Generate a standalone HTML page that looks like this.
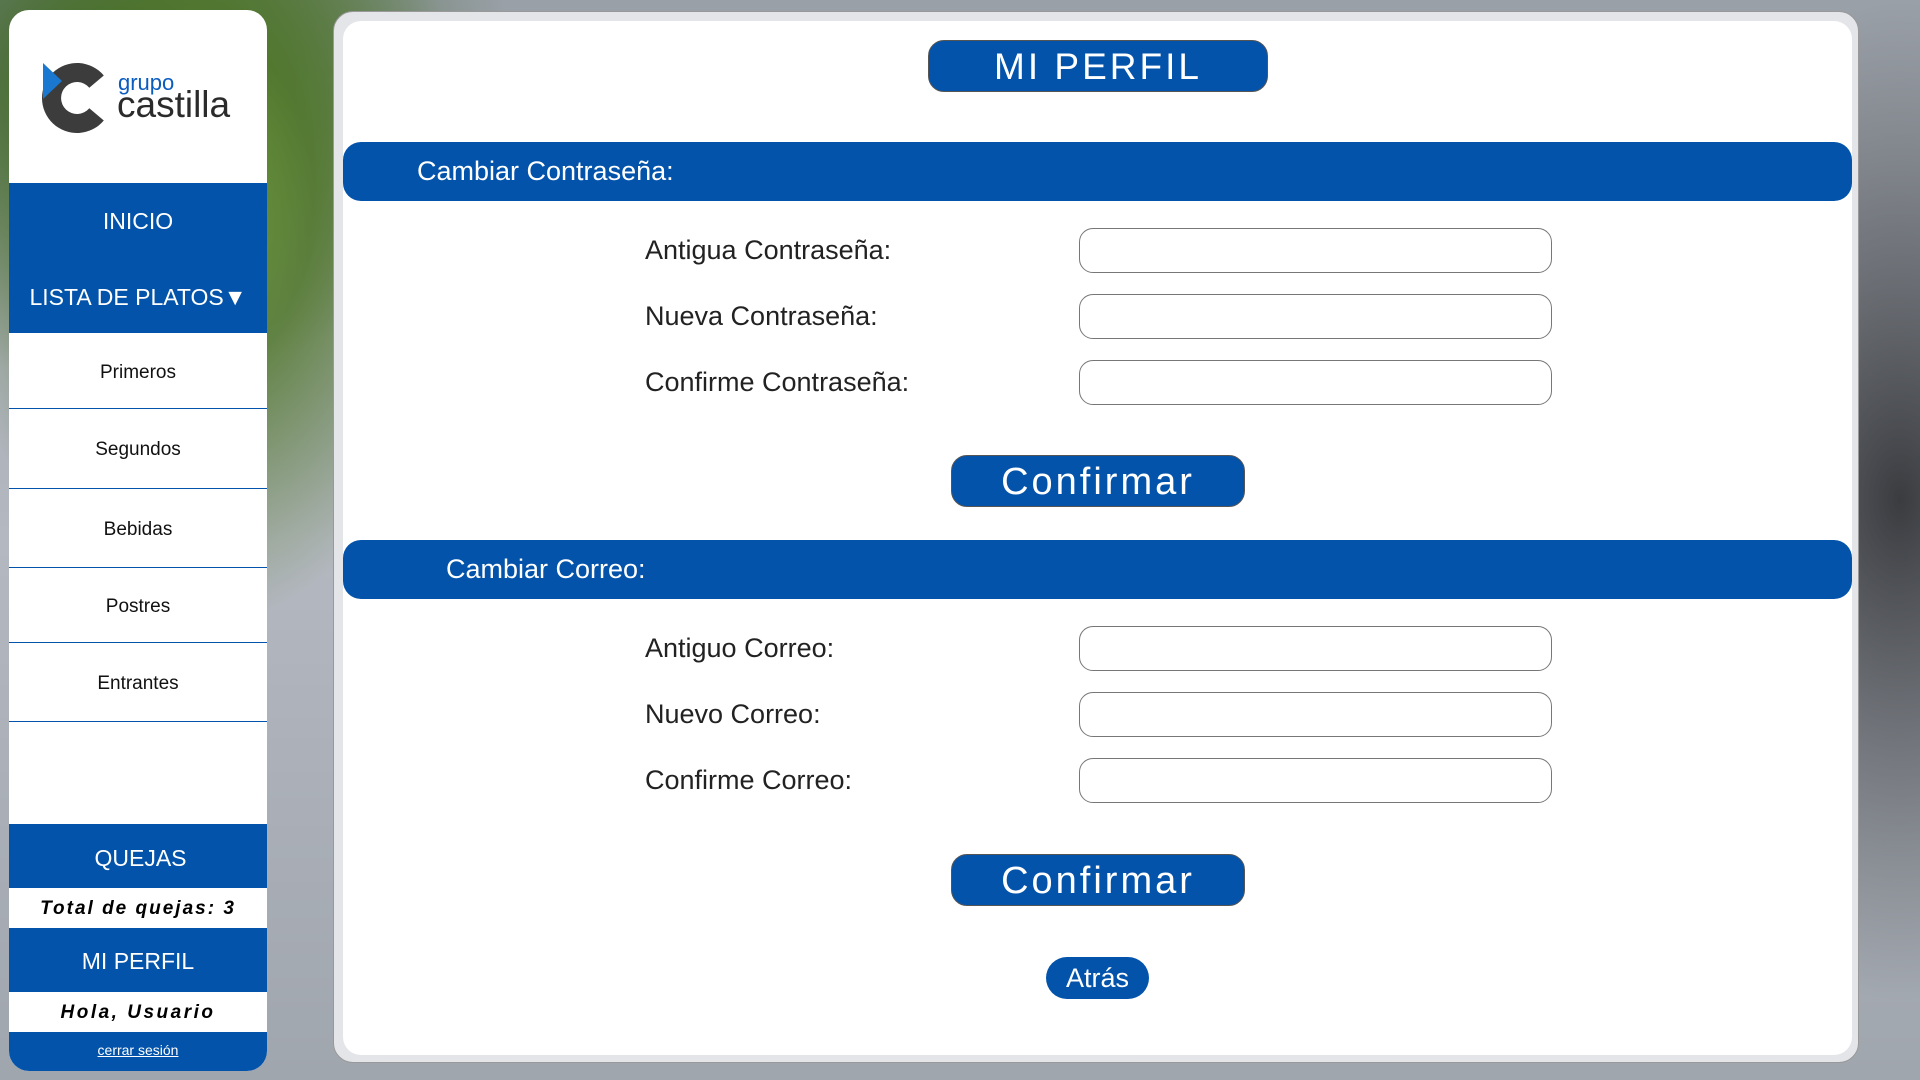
<!DOCTYPE html>
<html><head><meta charset="utf-8"><style>
*{margin:0;padding:0;box-sizing:border-box}
body{width:1920px;height:1080px;overflow:hidden;position:relative;font-family:"Liberation Sans",sans-serif;
background:
radial-gradient(ellipse 260px 420px at 210px 200px,#6f9a3e 0%,rgba(80,120,40,.8) 40%,rgba(80,120,40,0) 100%),
radial-gradient(ellipse 400px 300px at 120px 80px,#2f5a18 0%,rgba(40,80,20,0) 100%),
radial-gradient(ellipse 300px 500px at 1900px 500px,#3a3c40 0%,rgba(60,60,65,0) 100%),
linear-gradient(180deg,#9aa0a8 0%,#b4b8c0 50%,#a0a6ae 100%);}
.side{position:absolute;left:9px;top:10px;width:258px;height:1061px;background:#fff;border-radius:20px;overflow:hidden}
.blue{background:#0353ab;color:#fff}
.nav{position:absolute;left:0;width:258px;text-align:center}
.item{position:absolute;left:0;width:258px;text-align:center;font-size:19px;color:#111;border-bottom:1px solid #0353ab}
.main{position:absolute;left:333px;top:11px;width:1526px;height:1052px;background:#e4e5e8;border-radius:20px;border:1px solid #999}
.inner{position:absolute;left:9px;top:9px;width:1509px;height:1034px;background:#fff;border-radius:18px}
.pill{position:absolute;background:#0353ab;color:#fff;text-align:center;border:1px solid #555}
.bar{position:absolute;left:0;width:1509px;height:59px;background:#0353ab;border-radius:18px;color:#fff;font-size:27px;line-height:59px}
.lab{position:absolute;left:302px;font-size:27px;color:#222}
.inp{position:absolute;left:736px;width:473px;height:45px;border:1px solid #777;border-radius:14px}
</style></head><body>
<div class="side">
 <svg style="position:absolute;left:0;top:0" width="110" height="140" viewBox="0 0 110 140">
  <path d="M94.8 65.5 A35 35 0 1 0 94.8 110.5 L80.3 98.3 A16 16 0 1 1 80.3 77.7 Z" fill="#3c3c3c"/>
  <path d="M34 53 L34 89 L53 71 Z" fill="#1a78d0"/>
 </svg>
 <div style="position:absolute;left:109px;top:60px;font-size:22px;color:#0a5cbf">grupo</div>
 <div style="position:absolute;left:108px;top:74px;font-size:37px;color:#2b2b2b">castilla</div>
 <div class="nav blue" style="top:173px;height:150px"></div>
 <div class="nav" style="top:198px;font-size:23px;color:#fff">INICIO</div>
 <div class="nav" style="top:274px;font-size:23px;color:#fff">LISTA DE PLATOS▼</div>
 <div class="item" style="top:323px;height:76px;line-height:80px">Primeros</div>
 <div class="item" style="top:400px;height:79px;line-height:79px">Segundos</div>
 <div class="item" style="top:480px;height:78px;line-height:80px">Bebidas</div>
 <div class="item" style="top:559px;height:74px;line-height:76px">Postres</div>
 <div class="item" style="top:634px;height:78px;line-height:80px">Entrantes</div>
 <div class="nav blue" style="top:814px;height:64px;line-height:68px;font-size:23px;padding-left:5px">QUEJAS</div>
 <div class="nav" style="top:878px;height:40px;line-height:42px;font-size:19px;font-style:italic;font-weight:bold;letter-spacing:2px">Total de quejas: 3</div>
 <div class="nav blue" style="top:918px;height:64px;line-height:66px;font-size:23px">MI PERFIL</div>
 <div class="nav" style="top:982px;height:40px;line-height:42px;font-size:19px;font-style:italic;font-weight:bold;letter-spacing:2.5px">Hola, Usuario</div>
 <div class="nav blue" style="top:1022px;height:39px;line-height:36px;font-size:14px;text-decoration:underline">cerrar sesión</div>
</div>
<div class="main"><div class="inner">
 <div class="pill" style="left:585px;top:19px;width:340px;height:52px;border-radius:16px;font-size:37px;line-height:52px;letter-spacing:3px">MI PERFIL</div>
 <div class="bar" style="top:121px;padding-left:74px">Cambiar Contraseña:</div>
 <div class="lab" style="top:214px">Antigua Contraseña:</div><div class="inp" style="top:207px"></div>
 <div class="lab" style="top:280px">Nueva Contraseña:</div><div class="inp" style="top:273px"></div>
 <div class="lab" style="top:346px">Confirme Contraseña:</div><div class="inp" style="top:339px"></div>
 <div class="pill" style="left:608px;top:434px;width:294px;height:52px;border-radius:16px;font-size:38px;line-height:52px;letter-spacing:3px">Confirmar</div>
 <div class="bar" style="top:519px;padding-left:103px">Cambiar Correo:</div>
 <div class="lab" style="top:612px">Antiguo Correo:</div><div class="inp" style="top:605px"></div>
 <div class="lab" style="top:678px">Nuevo Correo:</div><div class="inp" style="top:671px"></div>
 <div class="lab" style="top:744px">Confirme Correo:</div><div class="inp" style="top:737px"></div>
 <div class="pill" style="left:608px;top:833px;width:294px;height:52px;border-radius:16px;font-size:38px;line-height:52px;letter-spacing:3px">Confirmar</div>
 <div class="pill" style="left:703px;top:936px;width:103px;height:42px;border-radius:21px;font-size:27px;line-height:42px;border:none">Atrás</div>
</div></div>
</body></html>
